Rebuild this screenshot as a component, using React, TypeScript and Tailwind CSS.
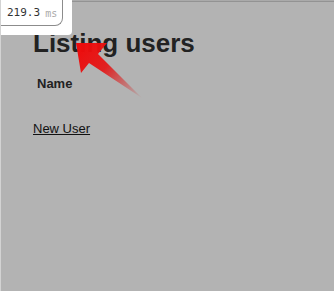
import React from "react";

export default function App() {
  return (
    <div
      className="relative w-[334px] h-[291px] overflow-hidden bg-[#b3b3b3] border-l border-[#d3d3d3]"
      style={{ fontFamily: '"Liberation Sans", Arial, sans-serif' }}
    >
      <div className="h-px bg-[#aaaaaa]" />
      <div className="h-px bg-[#939393]" />
      <div className="pl-[32px]">
        <h1 className="mt-[27px] text-[26px] leading-[29px] font-bold text-[#222222]">
          Listing users
        </h1>
        <div className="mt-[18px] pl-[4px] text-[13px] leading-[16px] font-bold text-[#222222]">
          Name
        </div>
        <div className="mt-[29px] text-[13px] leading-[15px]">
          <a href="#" className="text-[#111111] underline">
            New User
          </a>
        </div>
      </div>

      <svg
        className="absolute left-0 top-0 pointer-events-none"
        width="334"
        height="291"
        viewBox="0 0 334 291"
      >
        <defs>
          <linearGradient id="ar" x1="75" y1="43" x2="140" y2="98" gradientUnits="userSpaceOnUse">
            <stop offset="0" stopColor="#f00a0a" stopOpacity="1" />
            <stop offset="0.45" stopColor="#e51414" stopOpacity="0.92" />
            <stop offset="1" stopColor="#d02a2a" stopOpacity="0.05" />
          </linearGradient>
        </defs>
        <polygon
          points="75,43 106,43 97,54 141,98 88,63 80,73"
          fill="url(#ar)"
        />
      </svg>

      <div className="absolute -left-px top-0 w-[72px] h-[35px] bg-white rounded-br-[4px]">
        <div
          className="w-[63px] h-[26px] border-l border-r border-b border-[#8c8c8c] rounded-br-[8px] flex items-center pl-[6px] pt-[1px]"
          style={{ fontFamily: '"DejaVu Sans Mono", "Liberation Mono", monospace' }}
        >
          <span className="text-[11px] text-[#333333]">219.3</span>
          <span className="ml-[5px] text-[10px] text-[#aaaaaa]">ms</span>
        </div>
      </div>
    </div>
  );
}
